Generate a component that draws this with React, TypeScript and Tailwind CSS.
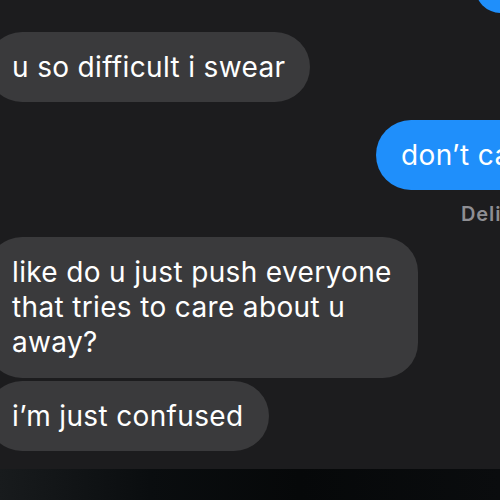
import React from "react";

const gray = "bg-[#3a3a3c] text-white";

export default function App() {
  return (
    <div
      className="w-[500px] h-[500px] overflow-hidden bg-[#1c1c1e] flex flex-col"
      style={{ fontFamily: "Inter, 'Noto Sans', sans-serif" }}
    >
      <div className="flex-1 flex flex-col">
        {/* partial blue bubble at top */}
        <div className="mt-[-57px] ml-[475px] h-[70px] w-[200px] shrink-0 rounded-[26px] bg-[#1f8ffb]" />

        {/* bubble 1 */}
        <div className="mt-[19px] flex">
          <div
            className={`${gray} ml-[-13px] rounded-[35px] px-[25px] py-[17.5px] text-[28px] leading-[35px] whitespace-nowrap tracking-[0.35px]`}
          >
            u so difficult i swear
          </div>
        </div>

        {/* blue bubble */}
        <div className="mt-[18px] flex">
          <div className="ml-[376px] rounded-[35px] bg-[#1f8ffb] text-white px-[25px] py-[17.5px] text-[28px] leading-[35px] whitespace-nowrap tracking-[0.35px]">
            don’t care
          </div>
        </div>
        <div className="mt-[12px] pl-[461px] text-[20px] leading-[24px] font-semibold text-[#8e8e93] whitespace-nowrap tracking-[0.9px]">
          Delivered
        </div>

        {/* bubble 3 */}
        <div className="mt-[11px] flex">
          <div
            className={`${gray} ml-[-13px] w-[431px] rounded-[35px] px-[25px] py-[18px] text-[28px] leading-[35px] tracking-[0.35px]`}
          >
            like do u just push everyone that tries to care about u away?
          </div>
        </div>

        {/* bubble 4 */}
        <div className="mt-[3px] flex">
          <div
            className={`${gray} ml-[-13px] rounded-[35px] px-[25px] py-[17.5px] text-[28px] leading-[35px] whitespace-nowrap tracking-[0.35px]`}
          >
            i’m just confused
          </div>
        </div>
      </div>
      <div className="h-[31px] shrink-0 bg-[linear-gradient(90deg,#181b1d_0%,#0a0d0f_30%,#060809_60%,#0a0c0e_100%)]" />
    </div>
  );
}
